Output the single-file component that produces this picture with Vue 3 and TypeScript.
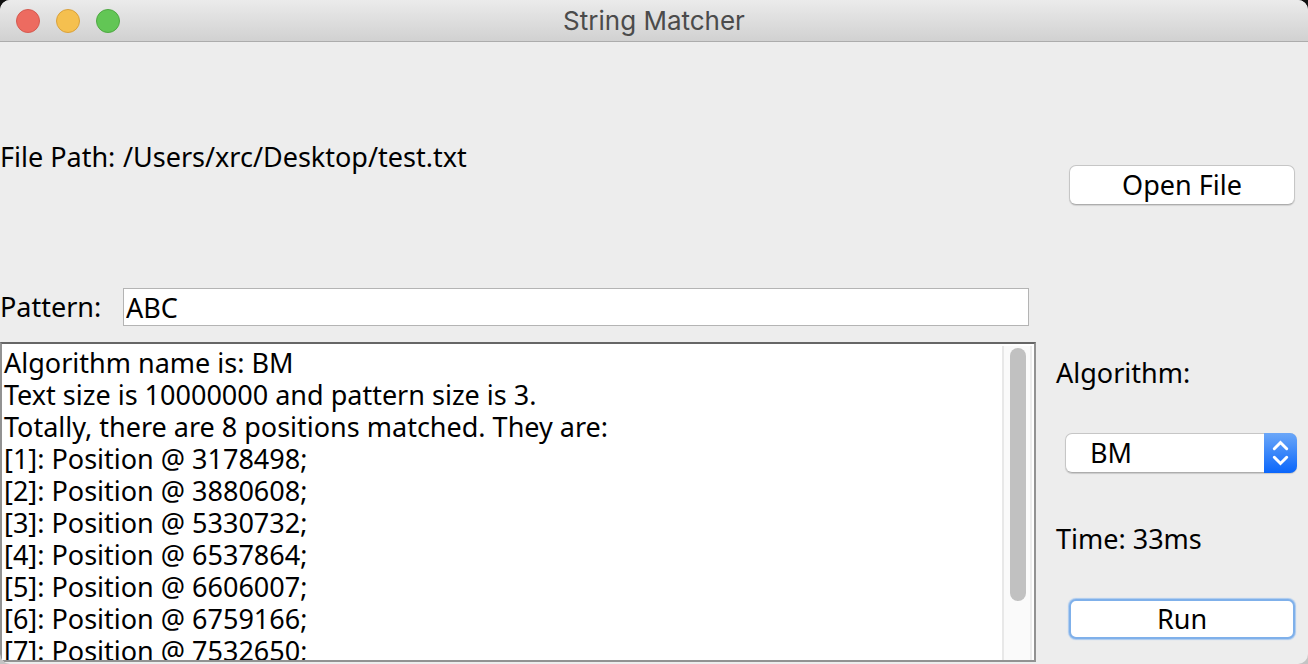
<script setup lang="ts">
import { computed, ref } from 'vue'

const filePath = ref('/Users/xrc/Desktop/test.txt')
const pattern = ref('ABC')
const algorithm = ref('BM')
const elapsed = ref(33)
const textSize = 10000000
const positions = [3178498, 3880608, 5330732, 6537864, 6606007, 6759166, 7532650, 9120417]

const report = computed(() =>
  [
    `Algorithm name is: ${algorithm.value}`,
    `Text size is ${textSize} and pattern size is ${pattern.value.length}.`,
    `Totally, there are ${positions.length} positions matched. They are:`,
    ...positions.map((p, i) => `[${i + 1}]: Position @ ${p};`),
  ].join('\n'),
)
</script>

<template>
  <div class="window">
    <header class="titlebar">
      <div class="lights">
        <button class="light close" type="button" aria-label="Close"></button>
        <button class="light minimize" type="button" aria-label="Minimize"></button>
        <button class="light zoom" type="button" aria-label="Zoom"></button>
      </div>
      <h1>String Matcher</h1>
    </header>
    <main class="content">
      <section class="left">
        <div class="row">
          <span class="caption">File Path:</span>
          <span>{{ filePath }}</span>
        </div>
        <div class="row">
          <label class="caption" for="pattern">Pattern:</label>
          <input id="pattern" v-model="pattern" class="field" type="text" />
        </div>
        <div class="results">
          <textarea class="output" readonly aria-label="Results" :value="report"></textarea>
          <div class="track"><div class="thumb"></div></div>
        </div>
      </section>
      <aside class="right">
        <button class="push" type="button">Open File</button>
        <label class="text" for="algorithm">Algorithm:</label>
        <div class="popup">
          <select id="algorithm" v-model="algorithm">
            <option>BM</option>
            <option>KMP</option>
          </select>
          <span class="arrows">
            <svg width="33" height="40" viewBox="0 0 33 40" fill="none" stroke="#fff" stroke-width="3" stroke-linecap="round" stroke-linejoin="miter">
              <path d="M10.3 15.7L16.5 9.5L22.7 15.7M10.3 24.3L16.5 30.5L22.7 24.3" />
            </svg>
          </span>
        </div>
        <span class="text">Time: {{ elapsed }}ms</span>
        <button class="push focused" type="button">Run</button>
      </aside>
    </main>
  </div>
</template>

<style>
body {
  background: linear-gradient(#111 50%, #c4c4c4 50%);
}
</style>

<style scoped>
.window {
  box-sizing: border-box;
  display: grid;
  grid-template-rows: 42px 1fr;
  height: 100vh;
  min-height: 520px;
  overflow: hidden;
  border-radius: 10px;
  background: #ededed;
  color: #000;
  font: 450 27px/32px "Noto Sans", "Open Sans", sans-serif;
}
.titlebar {
  box-sizing: border-box;
  display: grid;
  grid-template-columns: 1fr auto 1fr;
  align-items: center;
  padding: 0 16px;
  background: linear-gradient(#ebebeb, #d1d1d1);
  border-bottom: 1px solid #acacac;
}
.lights {
  display: flex;
  gap: 16px;
}
.light {
  box-sizing: border-box;
  width: 24px;
  height: 24px;
  padding: 0;
  border: 1px solid;
  border-radius: 50%;
}
.close {
  background: #ed6b60;
  border-color: #d45a50;
}
.minimize {
  background: #f5c04f;
  border-color: #d9a13c;
}
.zoom {
  background: #62c655;
  border-color: #4fa843;
}
h1 {
  margin: 0;
  color: #4b4b4b;
  font: 400 26px/32px Inter, Roboto, sans-serif;
}
.content {
  display: grid;
  grid-template-columns: 1fr 272px;
  min-height: 0;
}
.left {
  display: grid;
  grid-template-rows: 230fr 70fr 320fr;
  min-width: 0;
  min-height: 0;
  padding-bottom: 2px;
}
.row {
  display: flex;
  align-items: center;
  padding-right: 7px;
}
.caption {
  flex: 0 0 123px;
}
.field {
  box-sizing: border-box;
  flex: 1;
  min-width: 0;
  height: 38px;
  padding: 0 2px;
  border: 1px solid #b4b4b4;
  border-radius: 0;
  outline: none;
  background: #fff;
  color: #000;
  font: inherit;
}
.results {
  display: flex;
  min-height: 0;
  border: 2px solid #929292;
  border-top-color: #666;
  background: #fff;
}
.output {
  box-sizing: border-box;
  flex: 1;
  min-width: 0;
  padding: 3px 2px 0;
  border: 0;
  outline: none;
  resize: none;
  overflow: hidden;
  background: #fff;
  color: #000;
  font: inherit;
}
.track {
  box-sizing: border-box;
  width: 30px;
  margin: 2px 2px 0 0;
  padding: 2px 6px 0;
  border-left: 2px solid #e8e8e8;
  border-right: 2px solid #ededed;
  background: #fafafa;
}
.thumb {
  width: 16px;
  height: 81%;
  border-radius: 8px;
  background: #c1c1c1;
}
.right {
  display: grid;
  grid-template-rows: 286fr 90fr 70fr 102fr 58fr;
  align-items: center;
  padding: 0 11px 16px 20px;
}
.push {
  box-sizing: border-box;
  height: 40px;
  margin: 0 2px 0 13px;
  padding: 0;
  border: 1px solid #c6c6c6;
  border-bottom-color: #adadad;
  border-radius: 7px;
  background: #fff;
  box-shadow: 0 1px 1px rgba(0, 0, 0, 0.12);
  color: #000;
  font: inherit;
}
.push.focused {
  border: 2px solid #7fb0ea;
  box-shadow: 0 0 1px 1px #a9c9ef;
}
.popup {
  box-sizing: border-box;
  display: grid;
  grid-template-columns: 1fr 33px;
  height: 40px;
  margin-left: 9px;
  border-radius: 7px;
  box-shadow: 0 1px 1px rgba(0, 0, 0, 0.15);
}
.popup select {
  grid-area: 1 / 1 / 2 / 3;
  min-width: 0;
  padding: 0 33px 0 24px;
  border: 1px solid #c6c6c6;
  border-bottom-color: #adadad;
  border-radius: 7px;
  outline: none;
  appearance: none;
  background: #fff;
  color: #000;
  font: inherit;
}
.arrows {
  z-index: 1;
  grid-area: 1 / 2;
  height: 40px;
  border-radius: 0 7px 7px 0;
  background: linear-gradient(#6ba7f8, #0a66fb);
  pointer-events: none;
}
.arrows svg {
  display: block;
}
</style>
